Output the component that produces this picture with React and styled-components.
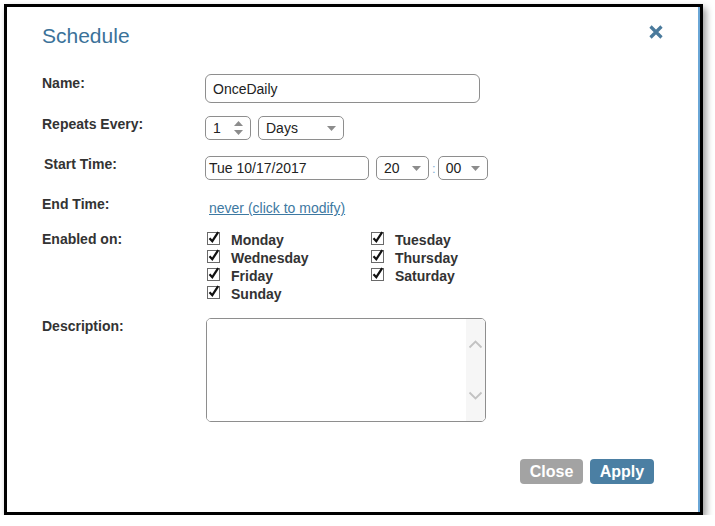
import React from 'react';
import styled, { createGlobalStyle } from 'styled-components';

const days = [
  ['Monday', 'Tuesday'],
  ['Wednesday', 'Thursday'],
  ['Friday', 'Saturday'],
  ['Sunday', null],
];

const CheckMark = () => (
  <svg width="15" height="15" viewBox="0 0 15 15">
    <rect x="1.5" y="2.5" width="12" height="12" fill="#fff" stroke="#6a6a6a" strokeWidth="1" />
    <path d="M3.5 8.2 L6.3 11.2 L12.2 2.2" fill="none" stroke="#111" strokeWidth="2.2" />
  </svg>
);

const Caret = () => (
  <svg width="9" height="5" viewBox="0 0 9 5">
    <path d="M0 0 H9 L4.5 5 Z" fill="#8c8c8c" />
  </svg>
);

const App = () => {
  return (
    <>
      <GlobalStyle />
      <Frame>
        <Dialog>
          <Header>
            <Title>Schedule</Title>
            <CloseIcon width="16" height="16" viewBox="0 0 16 16">
              <path d="M2.5 2.5 L13.5 13.5 M13.5 2.5 L2.5 13.5" stroke="#4a7a9c" strokeWidth="3.2" />
            </CloseIcon>
          </Header>

          <Row $top={24}>
            <Label $pad={1}>Name:</Label>
            <TextInput $width={275} $height={29} defaultValue="OnceDaily" />
          </Row>

          <Row $top={13}>
            <Label $pad={0}>Repeats Every:</Label>
            <Controls>
              <Box $width={46}>
                <BoxText>1</BoxText>
                <Spin>
                  <svg width="9" height="5" viewBox="0 0 9 5"><path d="M0 5 H9 L4.5 0 Z" fill="#8c8c8c" /></svg>
                  <svg width="9" height="5" viewBox="0 0 9 5"><path d="M0 0 H9 L4.5 5 Z" fill="#8c8c8c" /></svg>
                </Spin>
              </Box>
              <Box $width={86}>
                <BoxText>Days</BoxText>
                <Caret />
              </Box>
            </Controls>
          </Row>

          <Row $top={16}>
            <Label $pad={0} $shift={2}>Start Time:</Label>
            <Controls>
              <Box $width={164} $tight>
                <BoxText>Tue 10/17/2017</BoxText>
              </Box>
              <Box $width={53}>
                <BoxText>20</BoxText>
                <Caret />
              </Box>
              <Colon>:</Colon>
              <Box $width={50}>
                <BoxText>00</BoxText>
                <Caret />
              </Box>
            </Controls>
          </Row>

          <Row $top={16}>
            <Label $pad={0}>End Time:</Label>
            <Link href="#">never (click to modify)</Link>
          </Row>

          <Row $top={14}>
            <Label $pad={1}>Enabled on:</Label>
            <DayGrid>
              {days.flat().map((d, i) =>
                d ? (
                  <Day key={i}>
                    <CheckMark />
                    <DayName>{d}</DayName>
                  </Day>
                ) : (
                  <span key={i} />
                )
              )}
            </DayGrid>
          </Row>

          <Row $top={16}>
            <Label $pad={0}>Description:</Label>
            <TextArea>
              <AreaInput />
              <ScrollTrack>
                <svg width="15" height="10" viewBox="0 0 15 10"><path d="M1.5 8.5 L7.5 2.5 L13.5 8.5" fill="none" stroke="#c2c2c2" strokeWidth="1.8" /></svg>
                <svg width="15" height="10" viewBox="0 0 15 10"><path d="M1.5 1.5 L7.5 7.5 L13.5 1.5" fill="none" stroke="#c2c2c2" strokeWidth="1.8" /></svg>
              </ScrollTrack>
            </TextArea>
          </Row>

          <Footer>
            <Button $bg="#a3a3a3" $width={63}>Close</Button>
            <Button $bg="#4b7fa3" $width={64}>Apply</Button>
          </Footer>
        </Dialog>
      </Frame>
    </>
  );
};

const GlobalStyle = createGlobalStyle`
  html, body {
    margin: 0;
    padding: 0;
    background: #ffffff;
    font-family: "Liberation Sans", Arial, sans-serif;
  }
`;

const Frame = styled.div`
  padding: 4px 0 0 4px;
`;

const Dialog = styled.div`
  box-sizing: border-box;
  width: 699px;
  height: 511px;
  border: 3px solid #000;
  background: #fff;
  box-shadow: 3px 4px 7px rgba(0, 0, 0, 0.4), inset -2px 0 0 #6aa6d6;
  padding: 15px 36px 0 35px;
  display: flex;
  flex-direction: column;
`;

const Header = styled.div`
  display: flex;
  justify-content: space-between;
  align-items: flex-start;
`;

const Title = styled.div`
  font-size: 21px;
  line-height: 28px;
  color: #3b7299;
`;

const CloseIcon = styled.svg`
  margin-top: 2px;
`;

const Row = styled.div`
  display: grid;
  grid-template-columns: 163px 1fr;
  align-items: start;
  margin-top: ${(p) => p.$top}px;
`;

const Label = styled.div`
  font-size: 14px;
  font-weight: bold;
  line-height: 16px;
  color: #333;
  padding-top: ${(p) => p.$pad}px;
  padding-left: ${(p) => p.$shift || 0}px;
`;

const TextInput = styled.input`
  box-sizing: border-box;
  width: ${(p) => p.$width}px;
  height: ${(p) => p.$height}px;
  border: 1px solid #8e8e8e;
  border-radius: 6px;
  padding: 0 7px;
  font-family: inherit;
  font-size: 14px;
  color: #222;
  outline: none;
`;

const Controls = styled.div`
  display: flex;
  align-items: center;
  gap: 7px;
`;

const Box = styled.div`
  box-sizing: border-box;
  width: ${(p) => p.$width}px;
  height: 24px;
  border: 1px solid #8e8e8e;
  border-radius: 5px;
  display: flex;
  align-items: center;
  justify-content: space-between;
  padding: 0 ${(p) => (p.$tight ? 3 : 7)}px;
  font-size: 14px;
  color: #222;
`;

const BoxText = styled.span`
  line-height: 22px;
`;

const Spin = styled.div`
  display: flex;
  flex-direction: column;
  gap: 4px;
`;

const Colon = styled.span`
  font-size: 13px;
  color: #7fb0d8;
  margin: 0 -5px 0 -4px;
`;

const Link = styled.a`
  font-size: 14px;
  color: #3e79a2;
  text-decoration: underline;
  padding: 4px 0 0 4px;
  line-height: 16px;
`;

const DayGrid = styled.div`
  display: grid;
  grid-template-columns: 164px 120px;
  grid-auto-rows: 18px;
`;

const Day = styled.div`
  display: flex;
  align-items: flex-start;
  gap: 10px;
  padding-left: 1px;
`;

const DayName = styled.span`
  font-size: 14px;
  font-weight: bold;
  color: #333;
  line-height: 18px;
  margin-top: 1px;
`;

const TextArea = styled.div`
  box-sizing: border-box;
  width: 280px;
  height: 104px;
  margin-left: 1px;
  border: 1px solid #8e8e8e;
  border-radius: 5px;
  display: flex;
  overflow: hidden;
`;

const AreaInput = styled.textarea`
  flex: 1;
  border: none;
  outline: none;
  resize: none;
`;

const ScrollTrack = styled.div`
  width: 19px;
  background: #f6f6f6;
  display: flex;
  flex-direction: column;
  align-items: center;
  justify-content: space-between;
  padding: 20px 0 20px;
`;

const Footer = styled.div`
  display: flex;
  justify-content: flex-end;
  gap: 7px;
  margin-top: 37px;
  margin-right: 10px;
`;

const Button = styled.button`
  box-sizing: border-box;
  width: ${(p) => p.$width}px;
  height: 25px;
  border: none;
  border-radius: 4px;
  background: ${(p) => p.$bg};
  color: #fff;
  font-family: inherit;
  font-size: 16px;
  font-weight: bold;
  padding: 0;
`;

export default App;
